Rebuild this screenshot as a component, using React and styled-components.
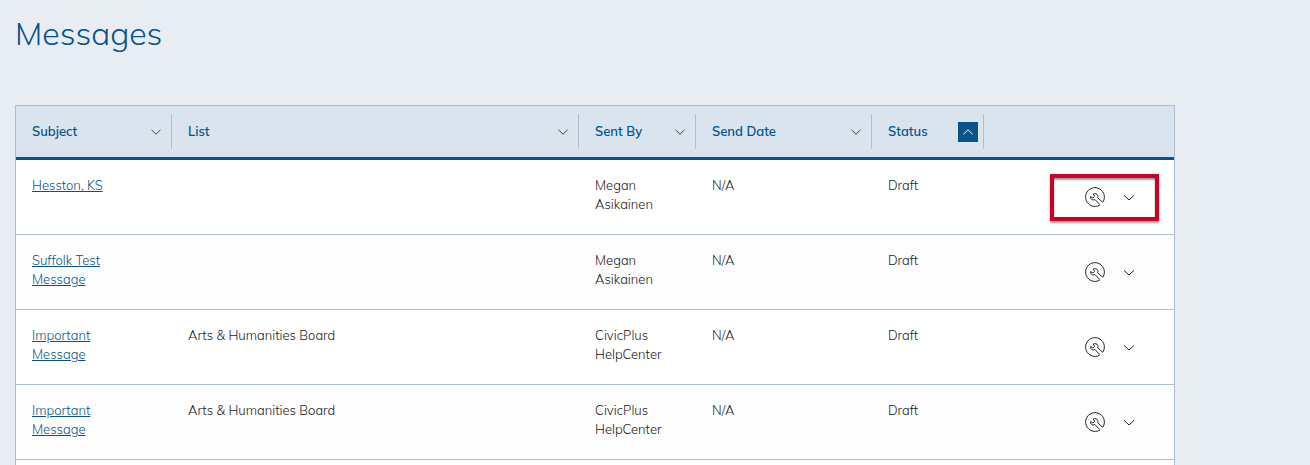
import React from "react";
import styled, { createGlobalStyle } from "styled-components";

const GlobalStyle = createGlobalStyle`
  * {
    box-sizing: border-box;
  }
  body {
    margin: 0;
    background: #e8edf1;
    color: #222;
    font-family: Mulish, Muli, Lato, "Open Sans", sans-serif;
    font-size: 13px;
    font-weight: 300;
    line-height: 19px;
  }
`;
const Page = styled.main`
  padding: 11px 135px 0 15px;
`;
const Title = styled.h1`
  margin: 0 0 50px;
  color: #06548a;
  font-size: 32px;
  font-weight: 300;
  line-height: 44px;
`;
const Table = styled.table`
  width: 100%;
  table-layout: fixed;
  border-collapse: separate;
  border-spacing: 0;
  border: 1px solid #aebfd3;
  border-bottom: 0;
`;
const Col = styled.col`
  width: ${(props) => (props.$width ? `${props.$width}px` : "auto")};
`;
const HeadCell = styled.th`
  padding: 8px 0;
  background: #dae4ef;
  border-bottom: 3px solid #06548a;
  color: #06548a;
  font-weight: 600;
  text-align: left;
`;
const HeadInner = styled.div`
  display: flex;
  align-items: center;
  justify-content: space-between;
  height: 35px;
  padding: 0 5px 0 16px;
  border-right: ${(props) => (props.$last ? "0" : "1px solid #aebfcd")};
`;
const SortButton = styled.button`
  display: flex;
  align-items: center;
  justify-content: center;
  width: 20px;
  height: 20px;
  padding: 0;
  border: 0;
  background: ${(props) => (props.$active ? "#06548a" : "transparent")};
  color: ${(props) => (props.$active ? "#fff" : "#444")};
  cursor: pointer;
`;
const Row = styled.tr`
  height: 75px;
  background: #fff;

  &:nth-child(even) {
    background: #fdfdfd;
  }
`;
const Cell = styled.td`
  padding: 16px ${(props) => (props.$subject ? "48px" : "16px")} 0 16px;
  border-bottom: 1px solid #aebfd3;
  vertical-align: top;
`;
const ActionCell = styled.td`
  padding: 0 15px 0 0;
  border-bottom: 1px solid #aebfd3;
  vertical-align: middle;
`;
const EndCell = styled.td`
  height: 5px;
  padding: 0;
  background: #fff;
`;
const SubjectLink = styled.a`
  color: #06548a;
`;
const Actions = styled.div`
  display: flex;
  align-items: center;
  justify-content: flex-end;
  gap: 18px;
  width: 109px;
  height: 47px;
  margin-left: auto;
  padding-right: 20px;
  border: 4px solid ${(props) => (props.$highlight ? "#cc0022" : "transparent")};
  box-shadow: ${(props) =>
    props.$highlight
      ? "0 2px 2px rgba(0, 0, 0, 0.4), inset 0 2px 2px rgba(0, 0, 0, 0.4)"
      : "none"};
`;
const IconButton = styled.button`
  display: flex;
  padding: 0;
  border: 0;
  background: none;
  color: #222;
  cursor: pointer;
`;

const Chevron = ({ up }) => (
  <svg width="10" height="6" viewBox="0 0 10 6" fill="none" stroke="currentColor">
    <path d={up ? "M.5 5.2 5 .8l4.5 4.4" : "M.5.8 5 5.2 9.5.8"} />
  </svg>
);

const MenuChevron = () => (
  <svg width="12" height="8" viewBox="0 0 12 8" fill="none" stroke="currentColor">
    <path d="M1 2.3 6 7l5-4.7" />
  </svg>
);

const ToolIcon = () => (
  <svg width="20" height="20" viewBox="0 0 20 20" fill="none" stroke="currentColor">
    <path d="M14.8 18.1A9.4 9.4 0 1 1 17.9 15.1" />
    <path d="M14.8 17.6 9.9 12.5C8.6 13.4 6.6 12.9 5.8 11.5 5.4 10.8 5.4 10.2 5.6 9.6L7.9 11 9.6 9.3 8.2 7C10 6.2 12.2 6.8 12.8 8.5 13.1 9.4 13 10 12.6 10.7L17.8 15.4" />
  </svg>
);

const columns = [
  { label: "Subject", width: 156 },
  { label: "List" },
  { label: "Sent By", width: 117 },
  { label: "Send Date", width: 176 },
  { label: "Status", width: 112, sorted: true },
];

const messages = [
  { subject: "Hesston, KS", list: "", sentBy: "Megan Asikainen", highlight: true },
  { subject: "Suffolk Test Message", list: "", sentBy: "Megan Asikainen" },
  { subject: "Important Message", list: "Arts & Humanities Board", sentBy: "CivicPlus HelpCenter" },
  { subject: "Important Message", list: "Arts & Humanities Board", sentBy: "CivicPlus HelpCenter" },
];

const MessageRow = ({ message }) => (
  <Row>
    <Cell $subject>
      <SubjectLink href="#">{message.subject}</SubjectLink>
    </Cell>
    <Cell>{message.list}</Cell>
    <Cell>{message.sentBy}</Cell>
    <Cell>N/A</Cell>
    <Cell>Draft</Cell>
    <ActionCell>
      <Actions $highlight={message.highlight}>
        <IconButton aria-label="Tools">
          <ToolIcon />
        </IconButton>
        <IconButton aria-label="More actions">
          <MenuChevron />
        </IconButton>
      </Actions>
    </ActionCell>
  </Row>
);

const App = () => {
  return (
    <>
      <GlobalStyle />
      <Page>
        <Title>Messages</Title>
        <Table>
          <colgroup>
            {columns.map((column) => (
              <Col key={column.label} $width={column.width} />
            ))}
            <Col $width={190} />
          </colgroup>
          <thead>
            <tr>
              {columns.map((column) => (
                <HeadCell key={column.label} scope="col">
                  <HeadInner>
                    {column.label}
                    <SortButton $active={column.sorted} aria-label={`Sort by ${column.label}`}>
                      <Chevron up={column.sorted} />
                    </SortButton>
                  </HeadInner>
                </HeadCell>
              ))}
              <HeadCell>
                <HeadInner $last />
              </HeadCell>
            </tr>
          </thead>
          <tbody>
            {messages.map((message, index) => (
              <MessageRow key={index} message={message} />
            ))}
          </tbody>
          <tfoot>
            <tr>
              <EndCell colSpan={6} />
            </tr>
          </tfoot>
        </Table>
      </Page>
    </>
  );
};

export default App;
